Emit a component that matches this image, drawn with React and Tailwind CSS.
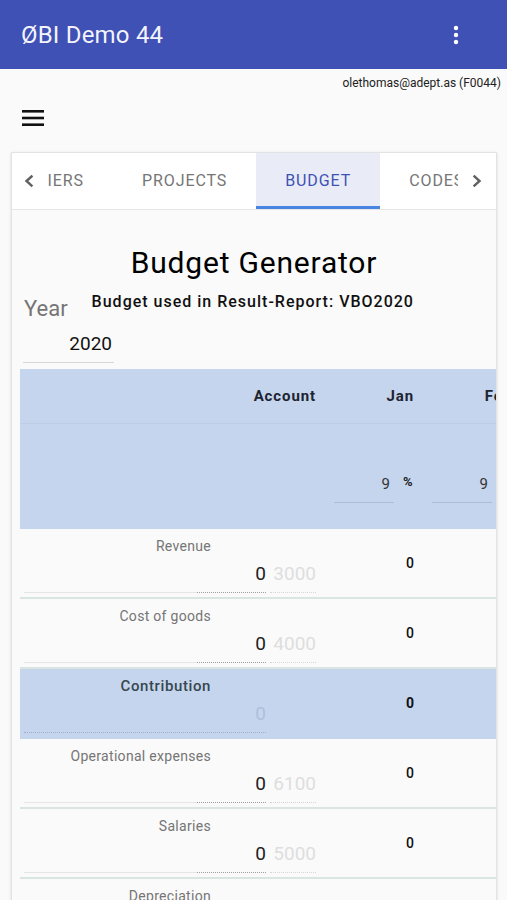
import React from 'react';

const rows = [
    { label: 'Revenue', account: '3000' },
    { label: 'Cost of goods', account: '4000' },
    { label: 'Contribution', sum: true },
    { label: 'Operational expenses', account: '6100' },
    { label: 'Salaries', account: '5000' },
    { label: 'Depreciation', account: '7800' },
];

const months = ['Jan', 'Feb', 'Mar'];

function Kebab() {
    return (
        <svg width="8" height="24" viewBox="0 0 8 24" fill="white">
            <circle cx="4" cy="5" r="2.2" />
            <circle cx="4" cy="12" r="2.2" />
            <circle cx="4" cy="19" r="2.2" />
        </svg>
    );
}

function Chevron({ right }) {
    return (
        <svg width="12" height="14" viewBox="0 0 12 14" fill="none" stroke="#616161" strokeWidth="2.4" strokeLinecap="square">
            {right ? <path d="M3.5 2.5 L8.5 7 L3.5 11.5" /> : <path d="M8.5 2.5 L3.5 7 L8.5 11.5" />}
        </svg>
    );
}

function DataRow({ row }) {
    const bg = row.sum ? 'bg-[#c5d5ee]' : 'bg-[#fafafa]';
    return (
        <div className={`flex h-[70px] border-b-[2px] ${row.sum ? 'border-[#c5d5ee]' : 'border-[#d9e5e1]'} ${bg}`}>
            <div className="w-[300px] pl-[4px] pr-[4px] pt-[8px]">
                <div className={`leading-[18px] text-right pr-[105px] ${row.sum ? 'text-[15px] font-medium text-[#37474f] tracking-[0.6px]' : 'text-[14px] text-[#757575] tracking-[0.3px]'}`}>
                    {row.label}
                </div>
                <div className="flex items-end mt-[7px]">
                    {row.sum ? (
                        <div className="w-[242px] text-right text-[19px] leading-[24px] pb-[6px] text-[#aebfdc] border-b border-dotted border-[#9fb0cf]">0</div>
                    ) : (
                        <>
                            <div className="w-[173px] h-[1px] bg-[#e6e6e6]" />
                            <div className="w-[69px] text-right text-[19px] leading-[24px] pb-[6px] text-[#212121] border-b border-dotted border-[#9e9e9e]">0</div>
                            <div className="w-[46px] ml-[4px] text-right text-[19px] leading-[24px] pb-[6px] text-[#dedede] border-b border-dotted border-[#d6d6d6]">{row.account}</div>
                        </>
                    )}
                </div>
            </div>
            {months.map((m) => (
                <div key={m} className={`w-[98px] flex items-center justify-end pr-[4px] text-[14px] text-[#111] ${row.sum ? 'font-bold' : 'font-medium'}`}>
                    0
                </div>
            ))}
        </div>
    );
}

export default function App() {
    return (
        <div className="h-[900px] overflow-hidden bg-[#fafafa] font-['Roboto',sans-serif]">
            <div className="h-[69px] bg-[#3f51b5] flex items-center justify-between pl-[21px] pr-[47px]">
                <span className="text-[24px] text-white/95 leading-none tracking-[0.2px]">ØBI Demo 44</span>
                <Kebab />
            </div>

            <div className="mt-[7px] text-right pr-[6px] text-[12px] leading-[14px] text-[#212121]">
                olethomas@adept.as (F0044)
            </div>

            <div className="mt-[20px] ml-[22px]">
                <svg width="22" height="16" viewBox="0 0 22 16" fill="#111">
                    <rect x="0" y="0" width="22" height="2.6" />
                    <rect x="0" y="6.7" width="22" height="2.6" />
                    <rect x="0" y="13.4" width="22" height="2.6" />
                </svg>
            </div>

            <div className="mt-[26px] ml-[11px] mr-[10px] border border-[#e3e3e3] shadow-[0_1px_3px_rgba(0,0,0,0.12)] bg-[#fafafa] overflow-hidden">
                {/* tabs */}
                <div className="flex h-[57px] bg-white border-b border-[#e6e6e6]">
                    <div className="w-[34px] flex items-center justify-center">
                        <Chevron />
                    </div>
                    <div className="flex-1 flex overflow-hidden text-[16px] tracking-[0.9px] text-[#757575] uppercase">
                        <div className="w-[67px] shrink-0 flex items-center justify-end pr-[29px]">IERS</div>
                        <div className="shrink-0 flex items-center px-[29px]">PROJECTS</div>
                        <div className="shrink-0 flex items-center px-[29px] bg-[#e9ecf7] text-[#3f51b5] border-b-[3px] border-[#4a84e2] pt-[3px]">BUDGET</div>
                        <div className="shrink-0 flex items-center px-[29px]">CODES</div>
                    </div>
                    <div className="w-[38px] flex items-center justify-center">
                        <Chevron right />
                    </div>
                </div>

                {/* content */}
                <div className="pt-[35px] text-[30px] leading-[36px] text-center text-black tracking-[0.8px]">
                    Budget Generator
                </div>
                <div className="flex items-start mt-[11px] ml-[12px]">
                    <div className="text-[22px] leading-[28px] text-[#757575] pt-[3px]">Year</div>
                    <div className="ml-[24px] text-[16px] leading-[20px] font-medium tracking-[1px] text-[#111]">
                        Budget used in Result-Report: VBO2020
                    </div>
                </div>
                <div className="w-[91px] ml-[11px] border-b border-[#d8d8d8] text-right pr-[2px] pt-[9px] pb-[6px] text-[19px] leading-[24px] text-[#111]">
                    2020
                </div>

                {/* table */}
                <div className="ml-[8px] mt-[6px] w-[620px]">
                    <div className="bg-[#c5d5ee]">
                        <div className="flex h-[55px] border-b border-[#bccde8]">
                            <div className="w-[300px] flex items-center justify-end pr-[4px] text-[15px] font-bold tracking-[0.9px] text-[#1d2430]">Account</div>
                            {months.map((m) => (
                                <div key={m} className="w-[98px] flex items-center justify-end pr-[4px] text-[15px] font-bold tracking-[0.9px] text-[#1d2430]">{m}</div>
                            ))}
                        </div>
                        <div className="flex h-[105px] items-end pb-[26px]">
                            <div className="w-[300px]" />
                            {months.map((m) => (
                                <div key={m} className="w-[98px] flex items-end pl-[14px]">
                                    <div className="w-[60px] text-right pr-[4px] text-[15px] leading-[22px] pb-[7px] text-[#333] border-b border-[#aebdd6]">9</div>
                                    <div className="ml-[9px] mb-[12px] text-[13px] font-bold text-[#222]">%</div>
                                </div>
                            ))}
                        </div>
                    </div>
                    {rows.map((r) => (
                        <DataRow key={r.label} row={r} />
                    ))}
                </div>
            </div>
        </div>
    );
}
